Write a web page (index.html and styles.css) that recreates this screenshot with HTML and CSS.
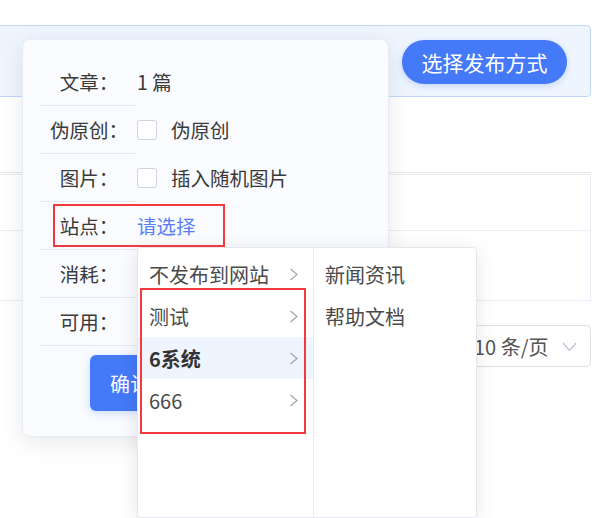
FILE: index.html
```html
<!DOCTYPE html>
<html lang="zh-CN">
<head>
  <meta charset="UTF-8" />
  <meta name="viewport" content="width=device-width, initial-scale=1.0" />
  <title>发布设置</title>
  <link rel="stylesheet" href="styles.css">
</head>
<body>
  <div class="page">
    <!-- Top toolbar -->
    <div class="banner">
      <button class="btn-publish">选择发布方式</button>
    </div>

    <!-- List behind the popover -->
    <div class="table">
      <div class="table-head"></div>
      <div class="table-body">
        <div class="table-row row-a"></div>
        <div class="table-row row-b"></div>
      </div>
    </div>

    <div class="pager">
      <div class="size-select">
        <span>10 条/页</span>
        <svg class="chevron" width="15" height="10" viewBox="0 0 15 10">
          <polyline points="1,1 7.5,8.5 14,1" fill="none" stroke="#c0c4cc" stroke-width="1.3" />
        </svg>
      </div>
    </div>

    <!-- Publish popover -->
    <div class="popover">
      <div class="form-row">
        <div class="form-label">文章：</div>
        <div class="form-value">1 篇</div>
      </div>
      <div class="form-row">
        <div class="form-label">伪原创：</div>
        <div class="form-value"><span class="checkbox"></span>伪原创</div>
      </div>
      <div class="form-row">
        <div class="form-label">图片：</div>
        <div class="form-value"><span class="checkbox"></span>插入随机图片</div>
      </div>
      <div class="form-row">
        <div class="form-label">站点：</div>
        <div class="form-value link">请选择</div>
      </div>
      <div class="form-row">
        <div class="form-label">消耗：</div>
        <div class="form-value"></div>
      </div>
      <div class="form-row">
        <div class="form-label">可用：</div>
        <div class="form-value"></div>
      </div>
      <button class="btn-confirm">确认</button>
    </div>

    <!-- Site cascader -->
    <div class="cascader">
      <ul class="cascader-menu first">
        <li class="cascader-item">不发布到网站<svg class="arrow" width="10" height="13" viewBox="0 0 10 13"><polyline points="1.5,1 8,6.5 1.5,12" fill="none" stroke="#a0a4ab" stroke-width="1.2" /></svg></li>
        <li class="cascader-item">测试<svg class="arrow" width="10" height="13" viewBox="0 0 10 13"><polyline points="1.5,1 8,6.5 1.5,12" fill="none" stroke="#a0a4ab" stroke-width="1.2" /></svg></li>
        <li class="cascader-item active">6系统<svg class="arrow" width="10" height="13" viewBox="0 0 10 13"><polyline points="1.5,1 8,6.5 1.5,12" fill="none" stroke="#a0a4ab" stroke-width="1.2" /></svg></li>
        <li class="cascader-item">666<svg class="arrow" width="10" height="13" viewBox="0 0 10 13"><polyline points="1.5,1 8,6.5 1.5,12" fill="none" stroke="#a0a4ab" stroke-width="1.2" /></svg></li>
      </ul>
      <ul class="cascader-menu">
        <li class="cascader-item">新闻资讯</li>
        <li class="cascader-item">帮助文档</li>
      </ul>
    </div>

    <!-- Annotation boxes -->
    <div class="mark mark-site"></div>
    <div class="mark mark-list"></div>
  </div>
</body>
</html>
```

FILE: styles.css
```css
body {
  margin: 0;
  background: #fff;
  font-family: "Noto Sans CJK SC", "Noto Sans", sans-serif;
  color: #3a3a3a;
  overflow: hidden;
}
.page {
  position: relative;
  width: 599px;
  height: 518px;
  padding-top: 25px;
  box-sizing: border-box;
}

/* toolbar */
.banner {
  box-sizing: border-box;
  margin-left: -1px;
  width: 592px;
  height: 72px;
  background: #eef5fe;
  border: 1px solid #c0d7fb;
  border-radius: 0 4px 4px 0;
  display: flex;
  align-items: center;
  justify-content: flex-end;
  padding-right: 23px;
}
.btn-publish {
  width: 165px;
  height: 44px;
  border: none;
  border-radius: 22px;
  background: #4479f8;
  color: #fff;
  font-family: inherit;
  font-size: 21px;
  box-shadow: 0 2px 6px rgba(68, 121, 248, 0.25);
  margin-top: 1px;
}

/* list */
.table {
  width: 591px;
}
.table-head {
  height: 75px;
  border-bottom: 1px solid #e6e6e6;
}
.table-body {
  margin-top: 1px;
  border-top: 1px solid #e9ebf5;
  border-right: 1px solid #e9ebf5;
}
.table-row {
  border-bottom: 1px solid #e9ebf5;
}
.row-a { height: 55px; }
.row-b { height: 69px; }

.pager {
  width: 591px;
  display: flex;
  justify-content: flex-end;
  margin-top: 24px;
}
.size-select {
  box-sizing: border-box;
  width: 129px;
  height: 42px;
  border: 1px solid #dcdfe6;
  border-radius: 4px;
  display: flex;
  align-items: center;
  justify-content: space-between;
  padding: 0 13px 0 11px;
  font-size: 20px;
  color: #555;
}
.chevron { margin-top: 2px; }

/* popover */
.popover {
  position: absolute;
  left: 22px;
  top: 39px;
  box-sizing: border-box;
  width: 367px;
  height: 398px;
  padding: 18px 18px 0;
  background: #f9fbff;
  border: 1px solid #e6ebf7;
  border-radius: 8px;
  box-shadow: 0 6px 24px rgba(0, 0, 0, 0.09);
}
.form-row {
  display: flex;
  align-items: center;
  height: 48px;
  font-size: 19.5px;
}
.form-label {
  box-sizing: border-box;
  width: 96px;
  height: 48px;
  line-height: 47px;
  text-align: center;
  border-bottom: 1px solid #e4e8f4;
}
.form-value {
  display: flex;
  align-items: center;
  padding-bottom: 1px;
}
.form-value.link {
  color: #5a7ef3;
}
.checkbox {
  box-sizing: border-box;
  width: 20px;
  height: 20px;
  border: 1px solid #d0d4dc;
  border-radius: 3px;
  background: #fff;
  margin-right: 14px;
}
.btn-confirm {
  margin: 9px 0 0 49px;
  width: 112px;
  height: 56px;
  border: none;
  border-radius: 6px;
  background: #4479f8;
  color: #fff;
  font-family: inherit;
  font-size: 20px;
  text-align: left;
  padding-left: 20px;
  box-shadow: 0 2px 8px rgba(68, 121, 248, 0.25);
}

/* cascader */
.cascader {
  position: absolute;
  left: 137px;
  top: 247px;
  box-sizing: border-box;
  width: 340px;
  height: 271px;
  display: flex;
  background: #fff;
  border: 1px solid #e4e7ed;
  border-radius: 4px;
  box-shadow: 0 4px 20px rgba(0, 0, 0, 0.1);
}
.cascader-menu {
  list-style: none;
  margin: 0;
  padding: 5px 0 0;
  flex: 1;
}
.cascader-menu.first {
  flex: 0 0 175px;
  border-right: 1px solid #e8eaef;
}
.cascader-item {
  height: 42px;
  display: flex;
  align-items: center;
  justify-content: space-between;
  padding: 0 14px 0 11px;
  font-size: 20px;
  color: #4a4a4a;
}
.cascader-item.active {
  background: #eff5fe;
  color: #333;
  font-weight: bold;
}

/* red annotation frames */
.mark {
  position: absolute;
  border: 2px solid #f03a3d;
}
.mark-site {
  left: 53px;
  top: 204px;
  width: 168px;
  height: 39px;
}
.mark-list {
  left: 140px;
  top: 288px;
  width: 162px;
  height: 142px;
}
```
